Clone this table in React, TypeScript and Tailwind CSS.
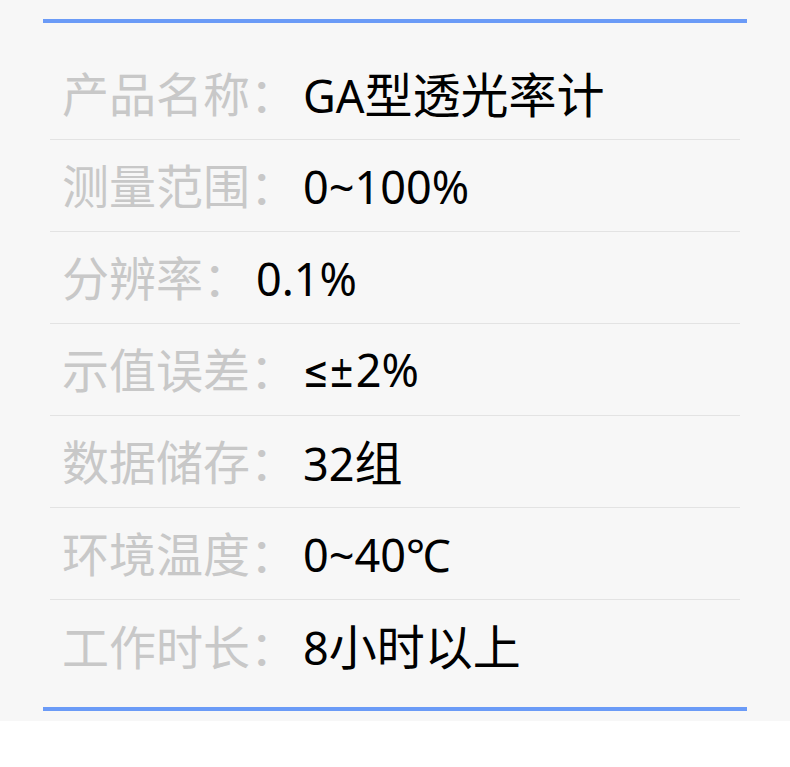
import React from "react";

const rows: [string, string][] = [
  ["产品名称：", "GA型透光率计"],
  ["测量范围：", "0~100%"],
  ["分辨率：", "0.1%"],
  ["示值误差：", "≤±2%"],
  ["数据储存：", "32组"],
  ["环境温度：", "0~40℃"],
  ["工作时长：", "8小时以上"],
];

function Value({ text }: { text: string }) {
  const parts = text.match(/[\u4e00-\u9fff]+|[≤±]+|[^\u4e00-\u9fff≤±]+/g) || [];
  return (
    <span className="text-[45px] leading-none text-black">
      {parts.map((p, i) =>
        /[\u4e00-\u9fff]/.test(p) ? (
          <span key={i} className="text-[48px]">{p}</span>
        ) : /[≤±]/.test(p) ? (
          <span
            key={i}
            className="inline-block text-[44px] origin-left scale-x-[0.7] mr-[-21px]"
            style={{ fontFamily: '"DejaVu Sans", sans-serif' }}
          >
            {p}
          </span>
        ) : (
          <span key={i}>{p}</span>
        )
      )}
    </span>
  );
}

export default function App() {
  return (
    <div className="w-[790px] h-[767px] bg-white" style={{ fontFamily: '"Noto Sans", "Noto Sans CJK SC", sans-serif' }}>
      <div className="bg-[#f7f7f7] pt-[19px] pb-[10px]">
        <div className="mx-[43px] h-[4px] bg-[#6b9bf7]" />
        <div className="mx-[50px] mt-[25px]">
          {rows.map(([k, v], i) => (
            <div
              key={k}
              className={`flex items-center h-[92px] pl-[12px] pt-[2px] ${i < rows.length - 1 ? "border-b border-[#e3e3e3]" : ""}`}
            >
              <span className="text-[47px] leading-none text-[#c8c8c8] mr-[6px]">{k}</span>
              <Value text={v} />
            </div>
          ))}
        </div>
        <div className="mx-[43px] mt-[15px] h-[4px] bg-[#6b9bf7]" />
      </div>
    </div>
  );
}
